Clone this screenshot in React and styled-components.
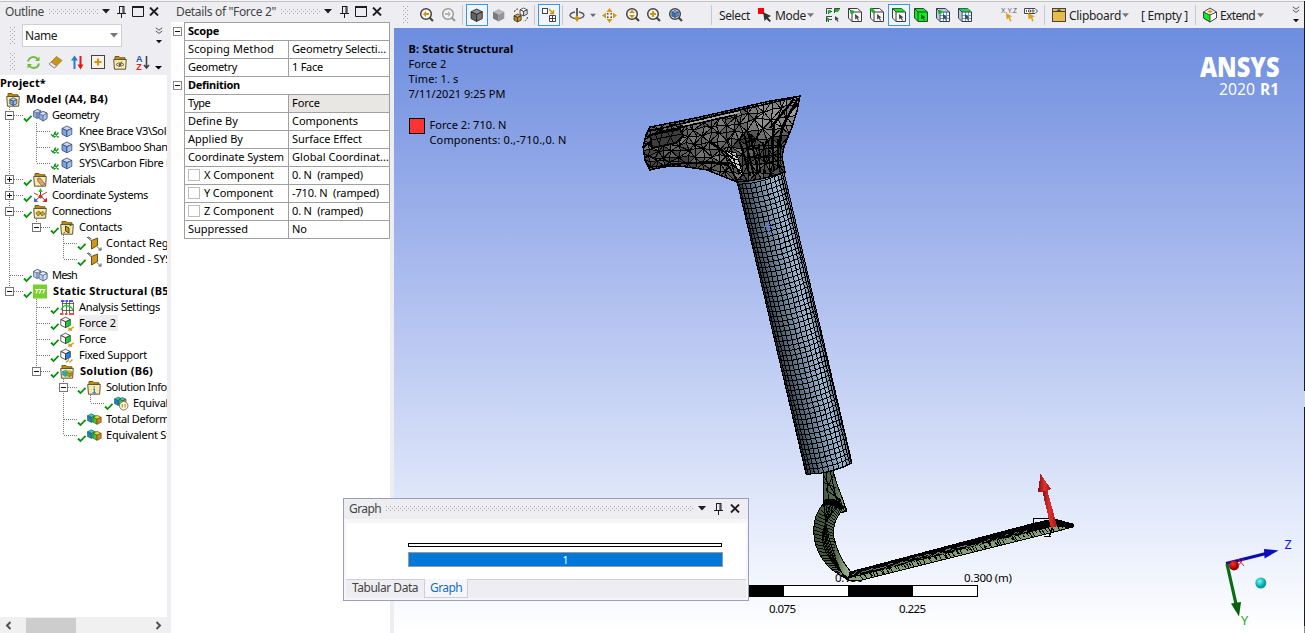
import React, { useLayoutEffect, useRef } from "react";
import styled, { createGlobalStyle, css } from "styled-components";

const Global = createGlobalStyle`
  * { box-sizing: border-box; }
  body { margin: 0; background: #eeeef2; overflow: hidden; font-family: "Noto Sans", "Open Sans", sans-serif; font-size: 11px; color: #000; }
  svg { display: block; flex: none; }
`;

/* ---------- text that keeps a set width by adjusting its tracking ---------- */
const Span = styled.span`
  white-space: pre;
  display: inline-block;
  flex: none;
`;
function Fit({ w, children }) {
  const ref = useRef(null);
  useLayoutEffect(() => {
    const el = ref.current;
    el.style.letterSpacing = "0px";
    const natural = el.getBoundingClientRect().width;
    el.style.letterSpacing = `${(w - natural) / children.length}px`;
  }, [w, children]);
  return <Span ref={ref}>{children}</Span>;
}

/* ---------- page ---------- */
const Page = styled.div`
  width: 1305px;
  height: 633px;
  display: flex;
  border-top: 1px solid #f4f4f4;
  position: relative;
  background: #eeeef2;
  box-shadow: inset 0 1px 0 #c3c3c3;
  padding-top: 1px;
`;
const Outline = styled.section`
  width: 167px;
  display: flex;
  flex-direction: column;
  overflow: hidden;
`;
const Details = styled.section`
  width: 219px;
  margin-left: 4px;
  display: flex;
  flex-direction: column;
  background: #fff;
`;
const Main = styled.section`
  width: 910px;
  margin-left: 4px;
  display: flex;
  flex-direction: column;
`;
const Edge = styled.div`
  width: 1px;
  margin-top: -1px;
  background: linear-gradient(#1b1b1f 0 390px, #d8d8d8 390px 406px, #1b1b1f 406px 625px, #8a8a8a 625px);
`;

/* ---------- panel title ---------- */
const TitleBar = styled.header`
  height: 20px;
  flex: none;
  display: flex;
  align-items: center;
  padding: 0 0 2px 5px;
  background: #eeeef2;
  color: #444;
  font-size: 12px;
`;
const dots = css`
  background-image: conic-gradient(from 0deg at 1px 1px, transparent 75%, #a3a3aa 0), conic-gradient(from 0deg at 1px 1px, transparent 75%, #a3a3aa 0);
  background-size: 4px 4px;
  background-position: 0 0, 2px 2px;
`;
const DotStrip = styled.i`
  width: ${(p) => p.$w}px;
  height: 5px;
  margin: 1px 4px 0 5px;
  ${dots}
`;
const Grip = styled.i`
  width: 6px;
  height: ${(p) => p.$h}px;
  flex: none;
  margin: 0 ${(p) => p.$mr || 0}px 0 ${(p) => p.$ml || 0}px;
  ${dots}
`;
const Gap = styled.i`
  width: ${(p) => p.$w}px;
  flex: none;
`;
const Tri = ({ c = "#1e1e1e", w = 8 }) => (
  <svg width={w} height="5" viewBox="0 0 8 5"><path d="M0 0H8L4 4.6Z" fill={c} /></svg>
);
const Pin = () => (
  <svg width="9" height="13" viewBox="0 0 9 13"><path d="M2.5 1V8M2 1.5H7M6 1V8M7 1V8M0 8.5H9M4.5 9V13" stroke="#1e1e1e" fill="none" /></svg>
);
const Max = () => (
  <svg width="12" height="11" viewBox="0 0 12 11"><path d="M.5 1V10.5H11.5V1M0 1H12" stroke="#1e1e1e" fill="none" /><path d="M0 1H12" stroke="#1e1e1e" strokeWidth="2" /></svg>
);
const Close = () => (
  <svg width="10" height="9" viewBox="0 0 10 9"><path d="M1 .5L9 8.5M9 .5L1 8.5" stroke="#1e1e1e" strokeWidth="1.9" /></svg>
);
const More = () => (
  <svg width="8" height="18" viewBox="0 0 8 18"><path d="M.8.8L4 3.2 7.2.8M.8 4L4 6.4 7.2 4" stroke="#555" fill="none" /><path d="M1 13H7L4 16.3Z" fill="#111" /></svg>
);

/* ---------- outline ---------- */
const FilterRow = styled.div`
  display: flex;
  height: 27px;
  flex: none;
  align-items: center;
`;
const Combo = styled.div`
  width: 100px;
  height: 23px;
  margin-right: 33px;
  background: #fff;
  border: 1px solid #ccceda;
  display: flex;
  align-items: center;
  justify-content: space-between;
  padding: 0 3px 0 2px;
  font-size: 12px;
  color: #222;
`;
const ToolRow = styled.div`
  display: flex;
  height: 26px;
  flex: none;
  align-items: center;
`;
const Tool = styled.span`
  width: ${(p) => p.$w || 22}px;
  height: 22px;
  flex: none;
  display: flex;
  align-items: center;
  justify-content: center;
  ${(p) => p.$on && "border: 1px solid #3399f0; background: #f3f4f8;"}
`;
const Tree = styled.div`
  background: #fff;
  flex: 1;
  font-size: 11px;
`;
const Row = styled.div`
  height: 16px;
  display: flex;
  align-items: center;
  font-weight: ${(p) => (p.$bold ? 700 : 400)};
  line-height: 16px;
`;
const Label = styled.span`
  margin-left: ${(p) => (p.$bold ? 5 : 4)}px;
  padding-right: 2px;
  flex: none;
  background: ${(p) => (p.$on ? "#eeeef0" : "transparent")};
`;
const Branches = styled.span`
  display: flex;
  flex: none;
`;
const ScrollBar = styled.div`
  height: 16px;
  flex: none;
  background: #f0f0f0;
  display: flex;
  align-items: center;
  padding: 0 5px;
`;
const Thumb = styled.i`
  width: 50px;
  height: 15px;
  margin: 0 79px 0 14px;
  background: #cdcdcd;
`;
const Arrow = ({ flip }) => (
  <svg width="7" height="9" viewBox="0 0 7 9"><path d={flip ? "M1.5 1L5 4.5 1.5 8" : "M5.5 1L2 4.5 5.5 8"} stroke="#505050" strokeWidth="2" fill="none" /></svg>
);

const Check = ({ x }) => (
  x ? (
    <path d="M24 11L26 13.5 29 8.5M27 9.5L31.5 14.5M31.5 9.5L27 14.5" stroke="#0a8a12" strokeWidth="1.2" fill="none" />
  ) : (
    <path d="M24 11.5L26.5 14 31.5 8.8" stroke="#0a8f0e" strokeWidth="1.8" fill="none" />
  )
);
const Guide = ({ kind, own, exp, x }) => (
  <svg width={own ? 33 : 27} height="16" viewBox={`0 0 ${own ? 33 : 27} 16`}>
    {kind !== " " && <path d={kind === "L" ? "M9.5 0V8" : "M9.5 0V16"} stroke="#777" strokeDasharray="1 1" />}
    {own && <path d="M10 8.5H24" stroke="#777" strokeDasharray="1 1" />}
    {exp && (
      <>
        <rect x="5.5" y="4.5" width="8" height="8" fill="#fff" stroke="#777" />
        <path d={exp === "+" ? "M7 8.5H12M9.5 6V11" : "M7 8.5H12"} stroke="#111" />
      </>
    )}
    {own && <Check x={x} />}
  </svg>
);

const Cube = ({ x = 0, y = 0, s = 1, t = "#c3d6f6", l = "#7ba2e4", r = "#9cbcf2", k = "#3a4a66", sw = 0.8 }) => (
  <g transform={`translate(${x} ${y}) scale(${s})`} stroke={k} strokeWidth={sw / s} strokeLinejoin="round">
    <path d="M0 2.5L5 0 10 2.5 5 4.8Z" fill={t} />
    <path d="M0 2.5L5 4.8V11L0 8.5Z" fill={l} />
    <path d="M10 2.5L5 4.8V11L10 8.5Z" fill={r} />
  </g>
);
const Folder = ({ children }) => (
  <>
    <path d="M2 4V1.5H6L7 2.8H12V5" fill="#c89000" stroke="#6f5a20" />
    <path d="M.7 4.5H13.3L12.6 14.2H1.5Z" fill="#fbeaa5" stroke="#4a4638" strokeWidth=".9" />
    {children}
  </>
);
const Pair = ({ t, l, r }) => (
  <g stroke="#44546e" strokeWidth=".7" strokeLinejoin="round">
    <path d="M.5 3.500L4.500 1.500 8 3 8 8.500 4 10.500 .5 8.500Z" fill={l} />
    <path d="M.5 3.500L4.500 1.500 8 3 4 5Z" fill={t} />
    <path d="M4 5V10.500" />
    <path d="M6 5.500L10 3.500 14 5V10.500L10 13 6 10.500Z" fill={l} />
    <path d="M10 7.500L14 5V10.500L10 13Z" fill={r} />
    <path d="M6 5.500L10 3.500 14 5 10 7.500Z" fill={t} />
  </g>
);
const treeIcons = {
  model: <Folder><Cube x={3.8} y={5.8} s={0.7} /></Folder>,
  geometry: <Pair t="#d3e2fa" l="#86a9e2" r="#a9c4f0" />,
  mesh: <Pair t="#e9f0fc" l="#b7cbed" r="#cfdef7" />,
  part: <Cube x={2} y={2} s={0.98} />,
  materials: <Folder><path d="M4.5 6.5L7 6 12 12 9 14 5 9.5Z" fill="#dca373" stroke="#80634c" strokeWidth=".8" /></Folder>,
  coord: <><path d="M7.5 8V2M7.5 8L2 13M7.5 8L13 13" stroke="#444" /><path d="M7.5 0L5.5 4H9.5Z" fill="#14c314" /><path d="M1 14V9.5L5.5 14Z" fill="#3f6fd0" /><path d="M14 14V9.5L9.5 14Z" fill="#e41c1c" /><path d="M1 5L5 7M14 4L9 7" stroke="#b33a3a" /><circle cx="7.5" cy="8.5" r="2" fill="#d43535" /></>,
  connections: <Folder><path d="M3 9L6 7 8 9.5 5 12ZM7 9L10 7.5 12 10 9 12Z" fill="#c5a53c" stroke="#6d5a28" strokeWidth=".7" /></Folder>,
  contacts: <Folder><path d="M5.5 6L9 8V13L5.5 11Z" fill="#c99718" stroke="#4d3d12" /><path d="M9.5 6L12 4.8M3.5 13L5 12" stroke="#555" /></Folder>,
  contact: <><path d="M4.500 2L10.500 4.500V13L4.500 9.500Z" fill="#cf981c" stroke="#59430c" strokeWidth=".9" transform="matrix(-1 0 0 1 15 0)" /><path d="M0 1L4 4.5M1 .8L4.5 3M10 10.500L14 14.5M14 11.5V14H11.500" stroke="#555" fill="none" /></>,
  statics: <><rect width="14" height="14" y=".5" fill="#78d02c" /><path d="M2 5.5H12.5M4.5 5.5L3 9.5M8 5.5L6.5 9.5M11.5 5.5L10 9.5" stroke="#fff" fill="none" strokeWidth="1.2" /></>,
  analysis: <><path d="M2.500 2V13M6.500 2V13M9.500 2V13M13.500 2V13M2 3.500H14M2 10.500H14" stroke="#444" fill="none" strokeWidth=".8" /><path d="M1 1H4.5M5.5 1H8M9 1H13" stroke="#1616e8" strokeWidth="1.4" /><path d="M0 14H3.5M5 14H7.5M9 14H14" stroke="#e01616" strokeWidth="1.4" /><path d="M1 10Q4 4 7.5 6 11 6 13 10" stroke="#19cf19" fill="none" strokeWidth="1.3" /></>,
  force: <><Cube x={0.8} y={1.2} s={0.95} t="#fff" l="#fff" r="#10d830" k="#333" /><path d="M14 11L9.5 13.3M9 11.5V14H12" stroke="#d6981c" fill="none" strokeWidth="1.3" /></>,
  fixed: <><Cube x={0.8} y={1.2} s={0.95} t="#fff" l="#fff" r="#1f86ee" k="#333" /><path d="M6 14.5L9 11.5M9.5 14.5L12.5 11.5" stroke="#d6981c" strokeWidth="1.3" /></>,
  solution: <Folder><Cube x={2.500} y={6} s={0.6} t="#36c9d5" l="#2b9ede" r="#5fd43a" k="#3a7a5a" sw={0.4} /><Cube x={6.500} y={6.500} s={0.6} t="#b7da33" l="#55c43a" r="#ee6a22" k="#6a6a2a" sw={0.4} /></Folder>,
  info: <Folder><path d="M7.3 6.3V7.6M6 9H7.4V12.5M5.5 12.8H9" stroke="#2c80d8" fill="none" strokeWidth="1.2" /></Folder>,
  result: <><Cube x={0.5} y={1.8} s={0.78} t="#35c9c0" l="#1b7de0" r="#25c95a" k="#1c5a45" sw={0.6} /><Cube x={6} y={3.3} s={0.82} t="#d5e03a" l="#39c93a" r="#ee7a20" k="#4d4a15" sw={0.6} /></>,
  probe: <><Cube x={0.5} y={1} s={0.78} t="#35c9c0" l="#1b7de0" r="#25c95a" k="#1c5a45" sw={0.6} /><Cube x={5} y={1.5} s={0.7} t="#40c9b0" l="#39c97a" r="#ee7a20" k="#204a35" sw={0.6} /><circle cx="9.7" cy="9.8" r="4.2" fill="#fffbe9" stroke="#6b6040" strokeWidth=".8" /><path d="M8.3 8V11.5M11 8V11.5" stroke="#c79a20" strokeWidth="1.3" /></>,
};
const rows = [
  ["T", "-", "geometry", "Geometry", 47],
  ["|T", "", "part", "Knee Brace V3\\Solid", 96, "x"],
  ["|T", "", "part", "SYS\\Bamboo Shank", 94, "x"],
  ["|L", "", "part", "SYS\\Carbon Fibre Foot", 109, "x"],
  ["T", "+", "materials", "Materials", 43],
  ["T", "+", "coord", "Coordinate Systems", 96],
  ["T", "-", "connections", "Connections", 59],
  ["|L", "-", "contacts", "Contacts", 43],
  ["| T", "", "contact", "Contact Region", 79],
  ["| L", "", "contact", "Bonded - SYS\\Bamboo", 111],
  ["T", "", "mesh", "Mesh", 25],
  ["L", "-", "statics", "Static Structural (B5)", 120, "b"],
  [" T", "", "analysis", "Analysis Settings", 81],
  [" T", "", "force", "Force 2", 37, "on"],
  [" T", "", "force", "Force", 27],
  [" T", "", "fixed", "Fixed Support", 68],
  [" L", "-", "solution", "Solution (B6)", 73, "b"],
  ["  T", "-", "info", "Solution Information", 99],
  ["  |L", "", "probe", "Equivalent Stress", 83],
  ["  T", "", "result", "Total Deformation", 88],
  ["  L", "", "result", "Equivalent Stress", 84],
];
const Icon = ({ children, w = 15, h = 15 }) => <svg width={w} height={h} viewBox={`0 0 ${w} ${h}`}>{children}</svg>;

function TreeRow({ row }) {
  const [g, exp, icon, text, w, flag] = row;
  const last = g.length - 1;
  const bold = flag === "b";
  return (
    <Row $bold={bold}>
      <Branches>
        {[...g].map((k, i) => (
          <Guide key={i} kind={k} own={i === last} exp={i === last ? exp : ""} x={flag === "x"} />
        ))}
      </Branches>
      <Icon>{treeIcons[icon]}</Icon>
      <Label $bold={bold} $on={flag === "on"}><Fit w={w}>{text}</Fit></Label>
    </Row>
  );
}

/* ---------- details grid ---------- */
const Grid = styled.div`
  width: 219px;
  display: flex;
  flex-direction: column;
  font-size: 11px;
`;
const GridRow = styled.div`
  height: 18px;
  display: grid;
  grid-template-rows: 100%;
  grid-template-columns: 13px ${(p) => (p.$head ? "206px" : "104px 102px")};
  line-height: 15px;
  &:last-child { height: 19px; }
`;
const Twisty = styled.div`
  padding: 5px 0 0 2px;
`;
const Cell = styled.div`
  border: 1px solid #a0a0a0;
  border-bottom: 0;
  border-right-width: ${(p) => (p.$key ? 0 : 1)}px;
  padding: 0 0 2px 3px;
  display: flex;
  align-items: center;
  overflow: hidden;
  font-weight: ${(p) => (p.$head ? 700 : 400)};
  background: ${(p) => (p.$gray ? "#e8e7e4" : "#fff")};
  ${GridRow}:last-child & { border-bottom: 1px solid #a0a0a0; }
`;
const Box = styled.i`
  width: 12px;
  height: 12px;
  border: 1px solid #bdbdbd;
  margin: 1px 4px 0 0;
  flex: none;
`;
const details = [
  { h: "Scope", w: 31 },
  { k: "Scoping Method", kw: 86, v: "Geometry Selecti...", w: 94 },
  { k: "Geometry", kw: 49, v: "1 Face", w: 31 },
  { h: "Definition", w: 52 },
  { k: "Type", kw: 22, v: "Force", w: 28, gray: true },
  { k: "Define By", kw: 50, v: "Components", w: 66 },
  { k: "Applied By", kw: 55, v: "Surface Effect", w: 70 },
  { k: "Coordinate System", kw: 96, v: "Global Coordinat...", w: 97 },
  { k: "X Component", kw: 70, v: "0. N  (ramped)", w: 71, box: true },
  { k: "Y Component", kw: 69, v: "-710. N  (ramped)", w: 87, box: true },
  { k: "Z Component", kw: 70, v: "0. N  (ramped)", w: 71, box: true },
  { k: "Suppressed", kw: 60, v: "No", w: 15 },
];

/* ---------- main toolbar ---------- */
const Bar = styled.div`
  height: 26px;
  flex: none;
  display: flex;
  align-items: center;
  background: #eeeef2;
  font-size: 12px;
  color: #1e1e1e;
`;
const Sep = styled.i`
  width: 1px;
  height: 20px;
  margin: 0 1px 0 2px;
  background: #c6c7d0;
  flex: none;
`;
const Push = styled.span`
  margin-left: auto;
  margin-right: 4px;
`;
const Lens = ({ children, c = "#444" }) => (
  <Icon w={16} h={16}><circle cx="7" cy="7" r="5.3" fill="#f5f5f7" stroke={c} strokeWidth="1.5" /><path d="M10.5 10.5L14 14" stroke={c} strokeWidth="2.2" /><g transform="translate(-.5 0)">{children}</g></Icon>
);
const Wire = ({ top, vertex, edge, mesh, all }) => (
  <Icon w={16} h={16}>
    <path d="M1.5 1.5H10.5L14.5 5V14.5H5L1.5 11Z" fill={all ? "#0af01a" : "#f6f6f8"} stroke="#3c3c3c" />
    {top && <path d="M2 1.7H10.3L14 5H5Z" fill="#0af01a" />}
    {mesh && <path d="M5 8.500H14M5 11.500H14M8.500 5V14M11.500 5V14M3 3V13M4 3H12" stroke="#4f9bea" fill="none" strokeWidth=".9" />}
    <path d="M1.5 1.5L5 5H14.5M5 5V14.5" stroke="#3c3c3c" fill="none" />
    {vertex && <circle cx="5" cy="5" r="2" fill="#13b32a" />}
    {edge && <path d="M1.5 1.5L5.5 5.5" stroke="#13b32a" strokeWidth="3" />}
    <path d="M8 7L12.5 10.5 10.7 10.8 12 13.3 11 13.7 9.8 11.3 8.2 12.5Z" fill={all ? "#225c22" : "#444"} />
  </Icon>
);

/* ---------- viewport ---------- */
const View = styled.div`
  flex: 1;
  position: relative;
  overflow: hidden;
  background: linear-gradient(#6d8dde, #8fa6e7 22%, #b9c7f1 51%, #dfe7fa 78%, #ffffff);
`;
const Canvas = styled.svg`
  position: absolute;
  left: 0;
  top: 0;
`;
const Notes = styled.div`
  position: relative;
  padding: 13px 0 0 14.5px;
  font-size: 11px;
  line-height: 15px;
  display: flex;
  flex-direction: column;
  align-items: flex-start;
`;
const Bold = styled.b`
  font-weight: 700;
`;
const Legend = styled.div`
  display: flex;
  margin-top: 16px;
`;
const Swatch = styled.i`
  width: 16px;
  height: 16px;
  background: #ff3333;
  border: 1px solid #000;
  margin: 1px 5px 0 0;
`;
const LegendText = styled.div`
  display: flex;
  flex-direction: column;
  align-items: flex-start;
`;

function seeded(seed) {
  let s = seed;
  return () => ((s = (s * 16807) % 2147483647) / 2147483647);
}

function tube() {
  const rings = [];
  const n = 59;
  for (let i = 0; i <= n; i++) {
    const t = i / n;
    const x = 737 + 69 * t, y = 184 + 290 * t;
    rings.push(`M${x} ${y}Q${x + 20} ${y + 1} ${x + 46} ${y - 11}`);
  }
  let cols = "";
  const m = 14;
  for (let j = 1; j < m; j++) {
    const u = (1 - Math.cos((Math.PI * j) / m)) / 2;
    const drop = 4 * u * (1 - u) - 11 * u * u;
    cols += `M${737 + 46 * u} ${184 + drop}L${806 + 46 * u} ${474 + drop}`;
  }
  return rings.join("") + cols;
}

function headMesh() {
  const rnd = seeded(77);
  const nx = 21, ny = 9, p = [];
  for (let j = 0; j <= ny; j++) {
    p.push([]);
    for (let i = 0; i <= nx; i++) {
      const u = i / nx, v = j / ny;
      const top = 127 - 33 * u, bot = 171 + 16 * u;
      p[j].push([641 + 162 * u + (rnd() - 0.5) * 5, top + (bot - top) * v + (rnd() - 0.5) * 4]);
    }
  }
  const out = [];
  const add = (a, b, c) => {
    const dark = a[0] > 735 && a[1] > 125 ? 25 : 0;
    const g = Math.round(85 + rnd() * 40 - dark + (a[0] > 750 && a[1] < 130 ? 35 : 0) - (a[0] < 700 && a[1] > 145 ? 25 : 0));
    out.push({ d: `M${a}L${b}L${c}Z`, f: `rgb(${g},${g},${g})` });
  };
  for (let j = 0; j < ny; j++)
    for (let i = 0; i < nx; i++) {
      const a = p[j][i], b = p[j][i + 1], c = p[j + 1][i + 1], d = p[j + 1][i];
      if ((i + j) % 2) { add(a, b, c); add(a, c, d); } else { add(a, b, d); add(b, c, d); }
    }
  return out;
}

function plateMesh() {
  const rnd = seeded(31);
  let flecks = "", thin = "";
  for (let x = 852; x < 1068; x += 3) {
    const t = (x - 850) / 205;
    const y = 571 - 51 * t;
    thin += `M${x} ${y}l${4 + rnd() * 5} ${7 + rnd() * 5}`;
    if (x < 1025) flecks += `M${x} ${y + 3 + rnd() * 4}l${2 + rnd() * 3} ${-1 - rnd()}`;
  }
  return { flecks, thin };
}

function hookMesh() {
  const rnd = seeded(9);
  let d = "";
  for (let i = 0; i < 34; i++) {
    const a = (-75 - i * 5.1) * (Math.PI / 180);
    const cx = 846, cy = 539;
    const x1 = cx + 34 * Math.cos(a), y1 = cy + 41 * Math.sin(a);
    const x2 = cx + 11 * Math.cos(a + 0.12 * rnd()), y2 = cy + 31 * Math.sin(a) + 5;
    d += `M${x1} ${y1}L${x2} ${y2}`;
  }
  for (let k = 0; k < 6; k++) d += `M${840 - k * 3.2} 505Q${800 + k * 5} 540 ${850 - k} 580`;
  return d;
}

const HEAD = "M650 127L700 117 770 101 800 96 797 111 792 127 784 147 782 157 785 172Q765 180 737 182L727 178 707 170 680 166 663 167 650 170 645 160 643 147 646 135Z";
const HOOK = "M823 470L833 471 837 484 847 511 840 513Q832 524 834 538 838 556 850 571L872 576 850 581Q836 573 830 568 812 550 814 526 815 513 824 503Z";
const PLATE = "M850 572L1035 523 1054 519 1073 524 1073 527 1050 533 862 580 848 581Z";

function Scene() {
  const pm = plateMesh();
  return (
    <Canvas width="910" height="605" viewBox="394 28 910 605">
      <defs>
        <linearGradient id="tube" gradientUnits="userSpaceOnUse" x1="737" y1="190" x2="784" y2="179">
          <stop offset="0" stopColor="#283038" /><stop offset=".25" stopColor="#51606f" /><stop offset=".6" stopColor="#8097ae" /><stop offset=".85" stopColor="#9db9d4" /><stop offset="1" stopColor="#6b7f93" />
        </linearGradient>
        <linearGradient id="hook" x1="0" x2="1"><stop offset="0" stopColor="#3c4a37" /><stop offset=".4" stopColor="#5a6d53" /><stop offset=".55" stopColor="#93ad87" /></linearGradient>
        <radialGradient id="teal" cx=".4" cy=".35"><stop offset="0" stopColor="#6ff" /><stop offset="1" stopColor="#0a9c9c" /></radialGradient>
        <radialGradient id="red" cx=".4" cy=".35"><stop offset="0" stopColor="#f33" /><stop offset="1" stopColor="#900" /></radialGradient>
        <linearGradient id="arrow" x1="0" x2="1"><stop offset="0" stopColor="#7d1010" /><stop offset=".5" stopColor="#e03030" /><stop offset="1" stopColor="#a01818" /></linearGradient>
        <clipPath id="head"><path d={HEAD} /></clipPath>
        <clipPath id="hookClip"><path d={HOOK} /></clipPath>
        <clipPath id="plateClip"><path d={PLATE} /></clipPath>
      </defs>

      <g fontFamily="Noto Sans, sans-serif" fontSize="11.5">
        <text x="835" y="582" textLength="28">0.150</text>
        <text x="964" y="582" textLength="48">0.300 (m)</text>
        <text x="769" y="613" textLength="27">0.075</text>
        <text x="899" y="613" textLength="27">0.225</text>
      </g>
      <rect x="719.5" y="585.5" width="258" height="11" fill="#fff" stroke="#000" />
      <path d="M720 586H784V597H720ZM848 586H913V597H848Z" />

      <g shapeRendering="crispEdges">
        <path d={HOOK} fill="url(#hook)" stroke="#000" />
        <g clipPath="url(#hookClip)" fill="none" stroke="#000">
          <path d={hookMesh()} strokeWidth=".9" />
          <path d="M826 470L829 505M830 470L838 507M824 476L843 508M834 474L826 490 841 500 828 508M823 482L836 488" />
          <path d="M822 504Q834 498 842 509" strokeWidth="6" />
        </g>
        <path d={PLATE} fill="#87a07c" stroke="#000" />
        <g clipPath="url(#plateClip)" stroke="#000" fill="none">
          <path d="M848 574L1054 521.500L1073 524" strokeWidth="9" />
          <path d={pm.thin} />
          <path d={pm.flecks} stroke="#66785f" />
        </g>
        <path d={PLATE} fill="none" stroke="#000" />

        <path d="M737 180L806 474Q830 475 852 463L783 168Z" fill="url(#tube)" stroke="#000" />
        <path d={tube()} fill="none" stroke="#000" strokeWidth="1" />

        <g clipPath="url(#head)">
          {headMesh().map((m, i) => <path key={i} d={m.d} fill={m.f} stroke="#000" />)}
          <path d="M727 151L736 153 741 166 734 163Z" fill="#b9b9b9" stroke="#000" />
          <path d="M725 150L738 158 743 176 736 168 729 158Z" fill="#d0d0d0" stroke="#000" />
          <path d="M725 155L738 160M728 160L741 166M731 165L743 172M731 152L739 175" stroke="#000" />
          <path d="M759 144L760 172M763 142L765 173M768 140L770 171M773 143L774 171M778 139L778 168M758 150L782 146M759 157L781 154M760 164L783 160" stroke="#000" strokeWidth="1.4" />
          <path d="M744 134L754 176M750 134L758 172M747 142L758 138M746 150L760 147M748 158L757 156M740 142L750 176M710 141L722 150 735 160M730 163L700 162" stroke="#000" strokeWidth="2" fill="none" />
          <path d="M650 131L740 110 797 97M652 134L735 115" stroke="#000" strokeWidth="1.6" fill="none" />
          <path d="M794 99L774 124 772 150M798 98L783 126 778 146M790 104L770 128" stroke="#000" strokeWidth="2.400" fill="none" />
          <path d="M650 135L680 129 683 136 676 143 652 148Z" fill="#3c3c3c" stroke="#000" strokeWidth="2" />
          <path d="M655 133L660 146M662 132L659 146M667 131L673 142M674 130L667 144M651 140L682 134" stroke="#000" />
          <path d="M683 125L740 112" stroke="#a9a9a9" strokeWidth="1.600" />
          <path d="M660 166Q700 160 728 165L737 180" stroke="#000" strokeWidth="2" fill="none" />
        </g>
        <path d={HEAD} fill="none" stroke="#000" strokeWidth="1.4" />
        <path d="M768.5 221V233M763 226.5H774" stroke="#5a78e8" />

        <path d="M1051 536H1043.500M1033.500 526V518.500H1051V533L1049 536" stroke="#000" fill="none" />
        <path d="M1042 490L1047 489 1057 526 1051 528Z" fill="url(#arrow)" />
        <path d="M1040.500 474L1051 489 1047 491 1038 492Z" fill="url(#arrow)" />
      </g>

      <path d="M1226 563.500L1266 553.500" stroke="#0a0ab0" strokeWidth="3" />
      <path d="M1278.500 550.500L1264 549 1264.500 558.500Z" fill="#0b0bc0" />
      <path d="M1227 564L1236 604" stroke="#0a6b12" strokeWidth="3.2" />
      <path d="M1239 616.500L1231 603.500 1241 602Z" fill="#07600d" />
      <circle cx="1234" cy="565.500" r="5" fill="url(#red)" />
      <path d="M1238 559L1244 566M1243.500 559L1238 566" stroke="#f01818" />
      <circle cx="1260.800" cy="583" r="5.500" fill="url(#teal)" />
      <g fontFamily="Noto Sans, sans-serif" fontSize="12.500">
        <text x="1284.500" y="549" fill="#1515f0">Z</text>
        <text x="1241" y="625" fill="#17a517">Y</text>
      </g>

      <g fill="#fff" fontFamily="Open Sans, sans-serif">
        <text x="1200" y="77" fontSize="29" fontWeight="800" textLength="79.500" lengthAdjust="spacingAndGlyphs">ANSYS</text>
        <text x="1219" y="95" fontSize="16.500" textLength="36" lengthAdjust="spacingAndGlyphs">2020</text>
        <text x="1260" y="95" fontSize="16.500" fontWeight="700" textLength="19" lengthAdjust="spacingAndGlyphs">R1</text>
      </g>
    </Canvas>
  );
}

/* ---------- floating graph ---------- */
const Float = styled.section`
  position: absolute;
  left: 343px;
  top: 497px;
  width: 406px;
  height: 103px;
  border: 1px solid #9a9dbd;
  background: #f6f6f8;
  display: flex;
  flex-direction: column;
`;
const Plot = styled.div`
  margin: 4px 2px 0;
  height: 56px;
  flex: none;
  background: #fff;
  padding: 20px 0 0 62px;
`;
const Track = styled.div`
  width: 314px;
  height: 4px;
  border: 1px solid #000;
`;
const Step = styled.div`
  width: 315px;
  height: 15px;
  margin-top: 5px;
  background: #0078d7;
  border: 1px solid #999;
  color: #fff;
  font-size: 10.5px;
  line-height: 14px;
  text-align: center;
`;
const Tabs = styled.div`
  display: flex;
  margin: 0 2px;
  height: 19px;
  background: #eeeef2;
  border-top: 1px solid #ccceda;
  font-size: 12px;
  color: #444;
`;
const Tab = styled.span`
  height: 18px;
  line-height: 16px;
  padding: 0 6px;
  ${(p) => p.$on && css`
    margin-top: -1px;
    color: #0e70c0;
    background: #f6f6f8;
    border: 1px solid #ccceda;
    border-top: 0;
    height: 19px;
    line-height: 18px;
    padding: 0 5px;
  `}
`;

export default function App() {
  return (
    <Page>
      <Global />
      <Outline>
        <TitleBar>
          <Fit w={39}>Outline</Fit><DotStrip $w={49} />
          <Tri /><Gap $w={7} /><Pin /><Gap $w={6} /><Max /><Gap $w={5} /><Close />
        </TitleBar>
        <FilterRow>
          <Grip $h={18} $ml={10} $mr={6} />
          <Combo><Fit w={32}>Name</Fit><Tri c="#777" /></Combo>
          <More />
        </FilterRow>
        <ToolRow>
          <Grip $h={18} $ml={10} $mr={6} />
          <Tool><Icon><path d="M2 6.500A5.500 5.500 0 0 1 12 4.500M13 8.500A5.500 5.500 0 0 1 3 10.500" stroke="#6cbf3a" strokeWidth="1.800" fill="none" /><path d="M13.500 1.500V6H9ZM1.500 13.500V9H6Z" fill="#6cbf3a" /></Icon></Tool>
          <Tool><Icon><path d="M1 9L8.500 1.500 14 5.500 6.500 13Z" fill="#c99418" stroke="#8d7234" strokeWidth=".7" /><path d="M1 9L3 7 8.500 11 6.500 13Z" fill="#eee" stroke="#777" strokeWidth=".7" /></Icon></Tool>
          <Tool><Icon><path d="M4.500 14V4" stroke="#2a7bd5" strokeWidth="2" /><path d="M1 5.500L4.500 .500 8 5.500Z" fill="#2a7bd5" /><path d="M10.500 1V11" stroke="#e81313" strokeWidth="2" /><path d="M7.500 9.500H13.500L10.500 14.500Z" fill="#e81313" /></Icon></Tool>
          <Tool $w={21}><Icon><rect x=".5" y=".5" width="13" height="13" fill="#f7f3e6" stroke="#444" /><path d="M7 3.500V10.500M3.500 7H10.500" stroke="#cf9614" strokeWidth="2" /></Icon></Tool>
          <Tool><Icon><Folder><path d="M3 9.500Q7 6 11 9.500 7 13 3 9.500M6 12L9 6.500" stroke="#555" strokeWidth=".8" fill="none" /><circle cx="7" cy="9.500" r="1.200" fill="#555" /></Folder></Icon></Tool>
          <Tool><svg width="15" height="17" viewBox="0 0 15 17" fontFamily="Liberation Sans, sans-serif" fontSize="9" fontWeight="700"><text x="1" y="8" fill="#1c4fae">A</text><text x="1.200" y="16" fill="#e02020">Z</text><path d="M11.500 2V13M9 11L11.500 14 14 11" stroke="#444" strokeWidth="1.600" fill="none" /></svg></Tool>
          <Gap $w={2} />
          <svg width="7" height="16" viewBox="0 0 7 16"><path d="M0 12H7L3.500 15.500Z" /></svg>
        </ToolRow>
        <Tree>
          <Row $bold><Fit w={46}>Project*</Fit></Row>
          <Row $bold><Gap $w={6} /><Icon>{treeIcons.model}</Icon><Label $bold><Fit w={82}>Model (A4, B4)</Fit></Label></Row>
          {rows.map((r, i) => <TreeRow key={i} row={r} />)}
        </Tree>
        <ScrollBar><Arrow /><Thumb /><Arrow flip /></ScrollBar>
      </Outline>

      <Details>
        <TitleBar>
          <Fit w={100}>{'Details of "Force 2"'}</Fit><DotStrip $w={39} />
          <Tri /><Gap $w={8} /><Pin /><Gap $w={6} /><Max /><Gap $w={5} /><Close />
        </TitleBar>
        <Grid>
          {details.map((d, i) => (
            <GridRow key={i} $head={!!d.h}>
              <Twisty>{d.h && <svg width="9" height="9"><rect x=".5" y=".5" width="8" height="8" fill="#fff" stroke="#888" /><path d="M2 4.500H7" stroke="#111" /></svg>}</Twisty>
              {d.h ? (
                <Cell $head><Fit w={d.w}>{d.h}</Fit></Cell>
              ) : (
                <>
                  <Cell $key>{d.box && <Box />}<Fit w={d.kw}>{d.k}</Fit></Cell>
                  <Cell $gray={d.gray}><Fit w={d.w}>{d.v}</Fit></Cell>
                </>
              )}
            </GridRow>
          ))}
        </Grid>
      </Details>

      <Main>
        <Bar>
          <Grip $h={18} $ml={9} $mr={7} />
          <Tool><Lens><path d="M7.500 4L4.500 7 7.500 10V8H10.500V6H7.500Z" fill="#cf9614" /></Lens></Tool>
          <Tool><Lens c="#999"><path d="M7.500 4L10.500 7 7.500 10V8H4.500V6H7.500Z" fill="#b5b5b5" /></Lens></Tool>
          <Sep /><Gap $w={2} />
          <Tool $on><Icon w={14} h={14}><Cube x={1} y={1} s={1.13} t="#8d8d8f" l="#606265" r="#75777a" k="#222" /></Icon></Tool>
          <Tool><Icon w={14} h={14}><Cube x={1} y={1} s={1.13} t="#b9b9bb" l="#77797c" r="#939597" k="none" /></Icon></Tool>
          <Tool><Icon w={16} h={16}><Cube x={1} y={7} s={0.72} t="#e0b040" l="#b88414" r="#cf9614" k="#333" /><Cube x={7} y={1} s={0.72} t="#fff" l="#eee" r="#ddd" k="#333" /><path d="M1.500 5Q2 2 5 2M14.500 10Q14 14 10.500 14" stroke="#444" fill="none" strokeDasharray="2 1" /></Icon></Tool>
          <Sep /><Gap $w={2} />
          <Tool $on><Icon w={16} h={16}><rect x="1.500" y="1.500" width="5" height="5" fill="#fff" stroke="#444" /><path d="M8.500 8.500H14.500V14.500H8.500ZM11.500 8.500V14.500M8.500 11.500H14.500" fill="#fff" stroke="#444" /><path d="M8 2L12 6M12.500 3V6.500H9" stroke="#cf9614" fill="none" strokeWidth="1.300" /></Icon></Tool>
          <Sep />
          <Tool $w={26}><Icon w={16} h={16}><path d="M6 5Q1 6 1 8.500 2 11.500 8 11.500 14 11.500 15 8.500 15 6 10 5" stroke="#555" fill="none" strokeWidth="1.300" /><path d="M8 1V9" stroke="#333" strokeWidth="1.500" /><path d="M8 8L10.500 11.500 8 15 5.500 11.500Z" fill="#cf9614" /></Icon></Tool>
          <Tri c="#667" w={6} /><Gap $w={1} />
          <Tool $w={25}><Icon w={15} h={15}><path d="M7.500 0L10.500 4H4.500ZM7.500 15L10.500 11H4.500ZM0 7.500L4 4.500V10.500ZM15 7.500L11 4.500V10.500Z" fill="#d59b14" /><path d="M5 5H6.500V6.500H5ZM8.500 5H10V6.500H8.500ZM5 8.500H6.500V10H5ZM8.500 8.500H10V10H8.500Z" fill="#444" /></Icon></Tool>
          <Tool $w={21}><Lens><path d="M7.500 2.800L10.500 6H4.500ZM7.500 11.200L10.500 8H4.500Z" fill="#cf9614" /></Lens></Tool>
          <Tool><Lens><path d="M7.500 4V10M4.500 7H10.500" stroke="#cf9614" strokeWidth="2" /></Lens></Tool>
          <Tool><Lens><Cube x={4.300} y={3.400} s={0.65} t="#8fb4e6" l="#3d72bd" r="#5b8cd3" k="#33517c" /></Lens></Tool>
          <Gap $w={22} /><Sep /><Gap $w={6} />
          <Fit w={31}>Select</Fit><Gap $w={7} />
          <Icon w={16} h={16}><path d="M1 1H7V7H1Z" fill="#f00" /><path d="M6 5L14 9 11 10.500 14 14 12.500 15 9.500 12 7.500 14Z" fill="#333" /></Icon>
          <Gap $w={2} /><Fit w={31}>Mode</Fit><Gap $w={1} /><Tri c="#777" w={7} /><Gap $w={8} />
          <Tool><Icon w={16} h={16}><path d="M1.500 7V1.500H7M3.500 7V4.500H7M9.500 6V1.500H15M1.500 15V9.500H7M3.500 15V12.500H7" stroke="#444" fill="none" /><circle cx="4.500" cy="4.500" r="1.700" fill="#13b32a" /><path d="M10 2H15L13 5H10Z" fill="#13b32a" /><path d="M2 10L5 12.500 2 14Z" fill="#13b32a" /><path d="M10 9L14 12 12.500 12.300 13.500 14.500 12 14.500 11.300 12.700 10 13.500Z" fill="#444" /></Icon></Tool>
          <Tool><Wire vertex /></Tool>
          <Tool><Wire edge /></Tool>
          <Tool $on><Wire top /></Tool>
          <Tool><Wire all /></Tool>
          <Tool><Wire mesh vertex /></Tool>
          <Tool><Wire mesh top /></Tool>
          <Gap $w={22} />
          <Tool><svg width="18" height="16" viewBox="0 0 18 16"><text x="1" y="5.500" fontFamily="Liberation Sans, sans-serif" fontSize="6.500" fill="#555" textLength="16">X.Y.Z</text><path d="M6 6L12.500 9.500 9.800 10 11.500 14 10 14.500 8.500 11 6.500 12.500Z" fill="#d9a31c" /></svg></Tool>
          <Tool><svg width="16" height="16" viewBox="0 0 16 16"><path d="M1.500 1.500H12L14.500 4 12 6.500H1.500Z" fill="#fff" stroke="#444" /><path d="M3.500 2.800V5.200M5.500 3H7.500V5H5.500ZM9 3H11V5H9Z" stroke="#444" strokeWidth=".8" fill="none" /><path d="M5 6L12 9.500 9.500 10 10.500 14 9 14.500 8 11 5.500 12.500Z" fill="#d9a31c" /></svg></Tool>
          <Sep /><Gap $w={5} />
          <Icon w={16} h={16}><rect x="1.500" y="1.500" width="13" height="13" fill="#e8bc48" stroke="#444" /><path d="M2 4.500H14" stroke="#444" /><path d="M5.500 4L8 2 10.500 4Z" fill="#444" /></Icon>
          <Gap $w={2} /><Fit w={52}>Clipboard</Fit><Gap $w={1} /><Tri c="#777" w={7} /><Gap $w={12} />
          <Fit w={47}>[ Empty ]</Fit><Gap $w={5} /><Sep /><Gap $w={5} />
          <Icon w={16} h={16}><path d="M1.500 5L8 1 14.500 5V11L8 15 1.500 11Z" fill="#fff" stroke="#444" /><path d="M1.500 5L8 8V15L1.500 11Z" fill="#0af01a" stroke="#444" /><path d="M8 8L14.500 5" stroke="#444" /><path d="M8 2.500V6.500M5.500 4.500H10.500" stroke="#cf9614" strokeWidth="1.300" /></Icon>
          <Gap $w={2} /><Fit w={35}>Extend</Fit><Gap $w={2} /><Tri c="#777" w={7} />
          <Push><More /></Push>
        </Bar>
        <View>
          <Scene />
          <Notes>
            <Bold><Fit w={105}>B: Static Structural</Fit></Bold>
            <Fit w={38}>Force 2</Fit>
            <Fit w={50}>Time: 1. s</Fit>
            <Fit w={97}>7/11/2021 9:25 PM</Fit>
            <Legend>
              <Swatch />
              <LegendText><Fit w={77}>Force 2: 710. N</Fit><Fit w={137}>Components: 0.,-710.,0. N</Fit></LegendText>
            </Legend>
          </Notes>
        </View>
      </Main>
      <Edge />

      <Float>
        <TitleBar>
          <Fit w={32}>Graph</Fit><DotStrip $w={308} />
          <Tri /><Gap $w={8} /><Pin /><Gap $w={7} /><Close />
        </TitleBar>
        <Plot><Track /><Step>1</Step></Plot>
        <Tabs><Tab><Fit w={66}>Tabular Data</Fit></Tab><Tab $on><Fit w={32}>Graph</Fit></Tab></Tabs>
      </Float>
    </Page>
  );
}
